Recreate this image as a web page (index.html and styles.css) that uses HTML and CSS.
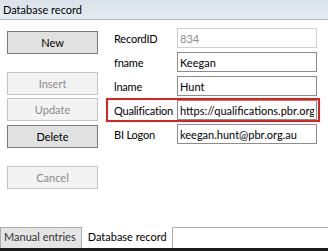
FILE: index.html
```html
<!DOCTYPE html>
<html lang="en">
<head>
    <meta charset="UTF-8">
    <title>Database record</title>
    <link rel="stylesheet" href="styles.css">
</head>
<body>
    <div class="window">
        <div class="header">Database record</div>

        <div class="page">
            <div class="buttons">
                <button class="btn btn-new">New</button>
                <button class="btn btn-insert" disabled>Insert</button>
                <button class="btn btn-update" disabled>Update</button>
                <button class="btn btn-delete">Delete</button>
                <button class="btn btn-cancel" disabled>Cancel</button>
            </div>

            <div class="fields">
                <div class="row">
                    <label for="recordid">RecordID</label>
                    <input type="text" id="recordid" value="834" readonly class="readonly">
                </div>
                <div class="row">
                    <label for="fname">fname</label>
                    <input type="text" id="fname" value="Keegan">
                </div>
                <div class="row">
                    <label for="lname">lname</label>
                    <input type="text" id="lname" value="Hunt">
                </div>
                <div class="row highlight">
                    <label for="qualification">Qualification</label>
                    <input type="text" id="qualification" value="https://qualifications.pbr.org.au/keegan-hunt">
                </div>
                <div class="row">
                    <label for="bilogon">BI Logon</label>
                    <input type="text" id="bilogon" value="keegan.hunt@pbr.org.au">
                </div>
            </div>
        </div>

        <div class="tabs">
            <div class="tab">Manual entries</div>
            <div class="tab active">Database record</div>
            <div class="tab-rest"></div>
        </div>
        <div class="bottom-bar"></div>
    </div>
</body>
</html>
```

FILE: styles.css
```css
* {
    box-sizing: border-box;
}
body {
    margin: 0;
    font-family: Lato, "Noto Sans", sans-serif;
    font-size: 11px;
    color: #000;
    background: #fff;
}
.window {
    width: 328px;
    height: 251px;
    display: flex;
    flex-direction: column;
    overflow: hidden;
}
.header {
    height: 20px;
    padding: 2px 0 0 3px;
    background: linear-gradient(#dae2ea, #e6ebf1);
    border-bottom: 1px solid #b4bcc6;
    line-height: 16px;
}
.page {
    flex: 1;
    display: flex;
    border-bottom: 1px solid #a0a0a0;
}
.buttons {
    width: 106px;
    padding-left: 7px;
    display: flex;
    flex-direction: column;
}
.btn {
    width: 91px;
    height: 23px;
    font-family: inherit;
    font-size: 11px;
    background: #e1e1e1;
    border: 1px solid #7a7a7a;
    color: #000;
    padding: 0;
}
.btn:disabled {
    background: #f3f3f3;
    border-color: #c4c4c4;
    color: #8a8a8a;
}
.btn-new {
    margin-top: 11px;
}
.btn-insert {
    margin-top: 18px;
}
.btn-update {
    margin-top: 3px;
}
.btn-delete {
    margin-top: 4px;
}
.btn-cancel {
    margin-top: 18px;
}
.fields {
    padding-top: 6px;
    display: flex;
    flex-direction: column;
}
.row {
    width: 214px;
    height: 24px;
    display: flex;
    align-items: center;
    padding-left: 6px;
    border: 2px solid transparent;
}
.row.highlight {
    border-color: #e0201c;
}
.row label {
    width: 63px;
    letter-spacing: -0.2px;
    white-space: nowrap;
}
.row input {
    width: 140px;
    height: 20px;
    padding: 0 2px;
    font-family: inherit;
    font-size: 11px;
    border: 1px solid #8c8c8c;
    color: #000;
    outline: none;
}
.row input.readonly {
    border-color: #cfcfcf;
    color: #8d8d8d;
}
.tabs {
    height: 21px;
    display: flex;
    margin-top: -1px;
}
.tab {
    padding: 1px 5px 0 3px;
    line-height: 16px;
    background: #e5e5e5;
    border: 1px solid #acacac;
    border-bottom: none;
    color: #333;
    white-space: nowrap;
}
.tab.active {
    background: #fff;
    border-top-color: #fff;
    border-left: none;
    padding-left: 6px;
    color: #000;
}
.tab-rest {
    flex: 1;
    border-top: 1px solid #acacac;
}
.bottom-bar {
    height: 3px;
    background: #1a1a1a;
}
```
